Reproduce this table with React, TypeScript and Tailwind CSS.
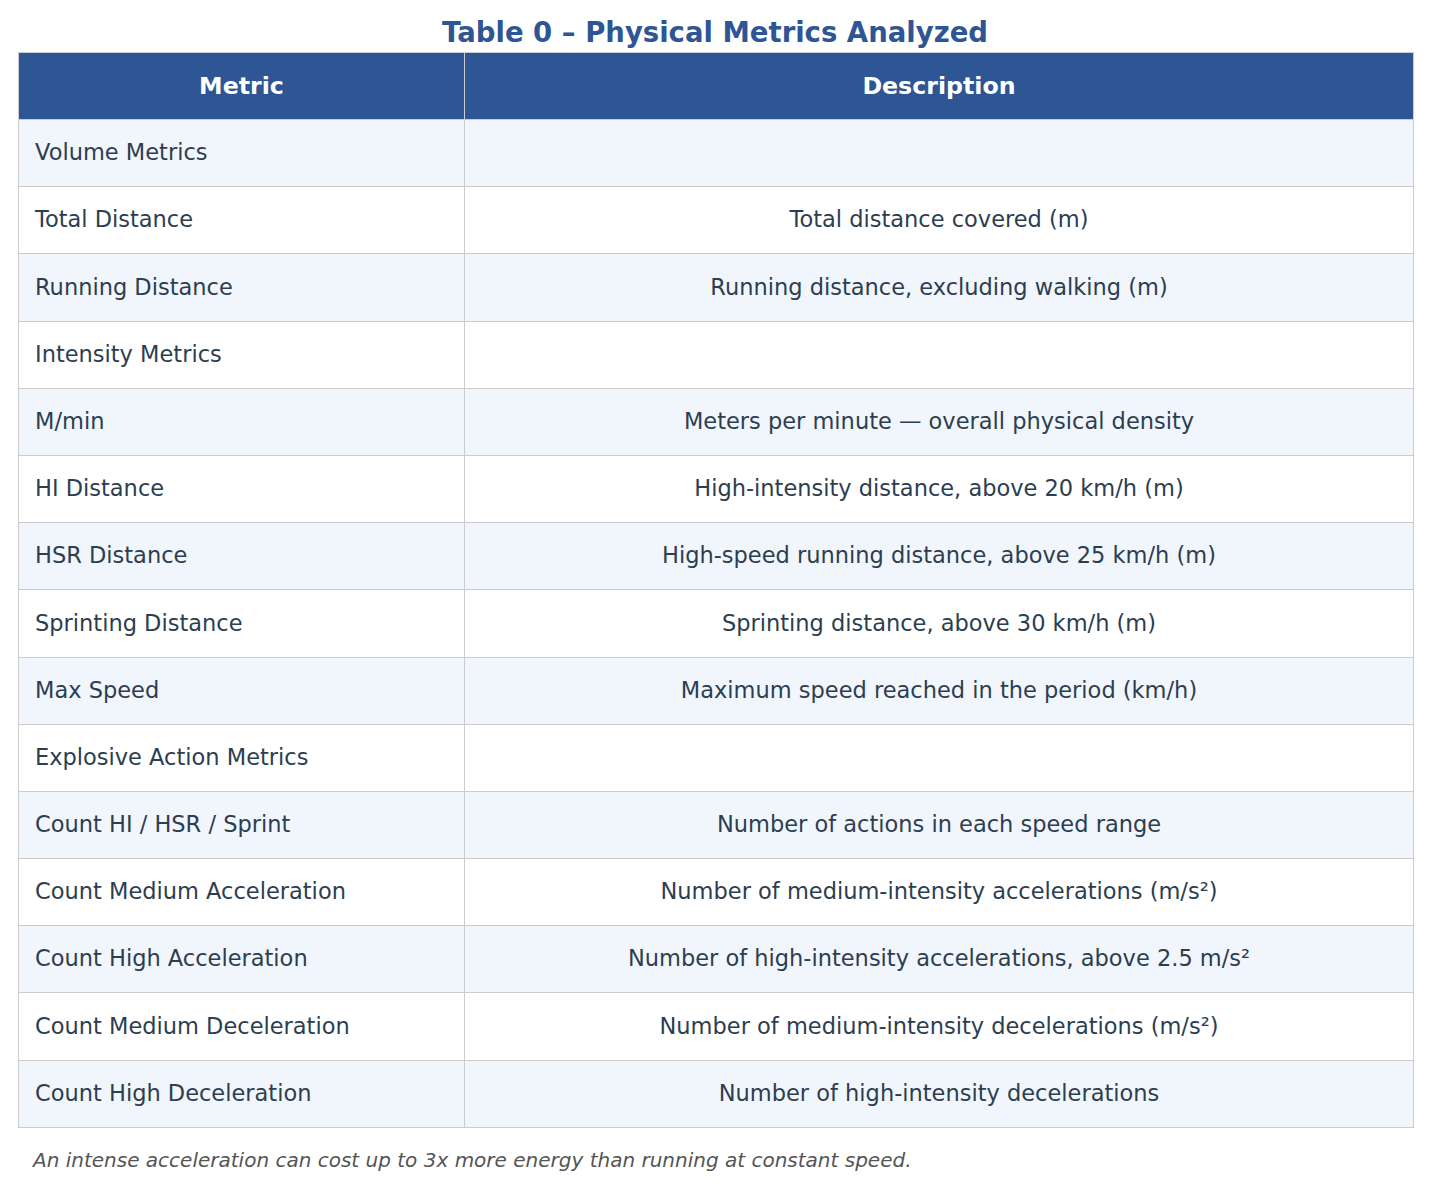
import React from "react";

const rows: [string, string][] = [
  ["Volume Metrics", ""],
  ["Total Distance", "Total distance covered (m)"],
  ["Running Distance", "Running distance, excluding walking (m)"],
  ["Intensity Metrics", ""],
  ["M/min", "Meters per minute — overall physical density"],
  ["HI Distance", "High-intensity distance, above 20 km/h (m)"],
  ["HSR Distance", "High-speed running distance, above 25 km/h (m)"],
  ["Sprinting Distance", "Sprinting distance, above 30 km/h (m)"],
  ["Max Speed", "Maximum speed reached in the period (km/h)"],
  ["Explosive Action Metrics", ""],
  ["Count HI / HSR / Sprint", "Number of actions in each speed range"],
  ["Count Medium Acceleration", "Number of medium-intensity accelerations (m/s²)"],
  ["Count High Acceleration", "Number of high-intensity accelerations, above 2.5 m/s²"],
  ["Count Medium Deceleration", "Number of medium-intensity decelerations (m/s²)"],
  ["Count High Deceleration", "Number of high-intensity decelerations"],
];

export default function App() {
  return (
    <div className="bg-white px-[18px] pt-[13px] font-['DejaVu_Sans',sans-serif] w-[1430px] min-h-[1188px]">
      <h1 className="text-center text-[27.5px] font-bold text-[#2e5594] leading-[38px] mb-px">
        Table 0 – Physical Metrics Analyzed
      </h1>
      <table className="w-[1396px] border-collapse table-fixed">
        <colgroup>
          <col className="w-[446px]" />
          <col />
        </colgroup>
        <thead>
          <tr className="bg-[#2e5594] text-white h-[67px]">
            <th className="border border-[#cccccc] text-[23.7px] font-bold text-center pt-[2px]">Metric</th>
            <th className="border border-[#cccccc] text-[23.7px] font-bold text-center pt-[2px]">Description</th>
          </tr>
        </thead>
        <tbody>
          {rows.map(([m, d], i) => (
            <tr key={i} className={`h-[67.2px] ${i % 2 === 0 ? "bg-[#f1f5fc]" : "bg-white"}`}>
              <td className="border border-[#cccccc] text-[22.5px] text-[#2c3e50] pl-4 text-left">{m}</td>
              <td className="border border-[#cccccc] text-[22.5px] text-[#2c3e50] text-center">{d}</td>
            </tr>
          ))}
        </tbody>
      </table>
      <p className="italic text-[20px] leading-[28px] text-[#555555] pl-[15px] mt-[18px]">
        An intense acceleration can cost up to 3x more energy than running at constant speed.
      </p>
    </div>
  );
}
